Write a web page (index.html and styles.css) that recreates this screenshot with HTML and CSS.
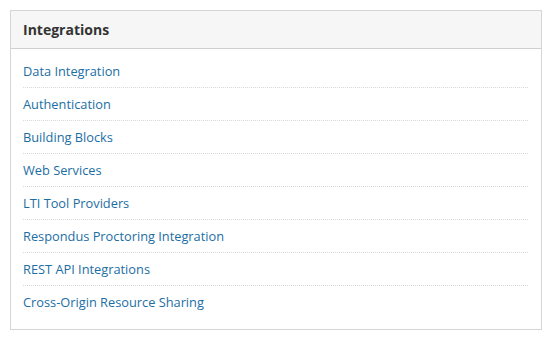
FILE: index.html
```html
<!DOCTYPE html>
<html lang="en">
<head>
  <meta charset="UTF-8" />
  <title>Integrations</title>
  <link rel="stylesheet" href="styles.css">
</head>
<body>
  <div class="panel">
    <h2 class="panel-title">Integrations</h2>
    <ul class="link-list">
      <li><a href="#">Data Integration</a></li>
      <li><a href="#">Authentication</a></li>
      <li><a href="#">Building Blocks</a></li>
      <li><a href="#">Web Services</a></li>
      <li><a href="#">LTI Tool Providers</a></li>
      <li><a href="#">Respondus Proctoring Integration</a></li>
      <li><a href="#">REST API Integrations</a></li>
      <li><a href="#">Cross-Origin Resource Sharing</a></li>
    </ul>
  </div>
</body>
</html>
```

FILE: styles.css
```css
body {
  margin: 10px 13px 10px 10px;
  font-family: 'Open Sans', sans-serif;
  background-color: white;
}

.panel {
  border: 1px solid #d5d5d5;
  background: white;
}

.panel-title {
  margin: 0;
  padding: 0 12px;
  height: 37px;
  line-height: 38px;
  font-size: 14px;
  font-weight: bold;
  color: #333;
  background-color: #f6f6f6;
  border-bottom: 1px solid #cfcfcf;
}

.link-list {
  list-style: none;
  margin: 0;
  padding: 6px 13px 11px 12px;
}

.link-list li {
  padding: 8px 0;
  line-height: 16px;
  font-size: 12.8px;
  border-bottom: 1px dotted #d8d8d8;
}

.link-list li:last-child {
  border-bottom: none;
}

.link-list a {
  color: #1b6ea4;
  text-decoration: none;
}
```
